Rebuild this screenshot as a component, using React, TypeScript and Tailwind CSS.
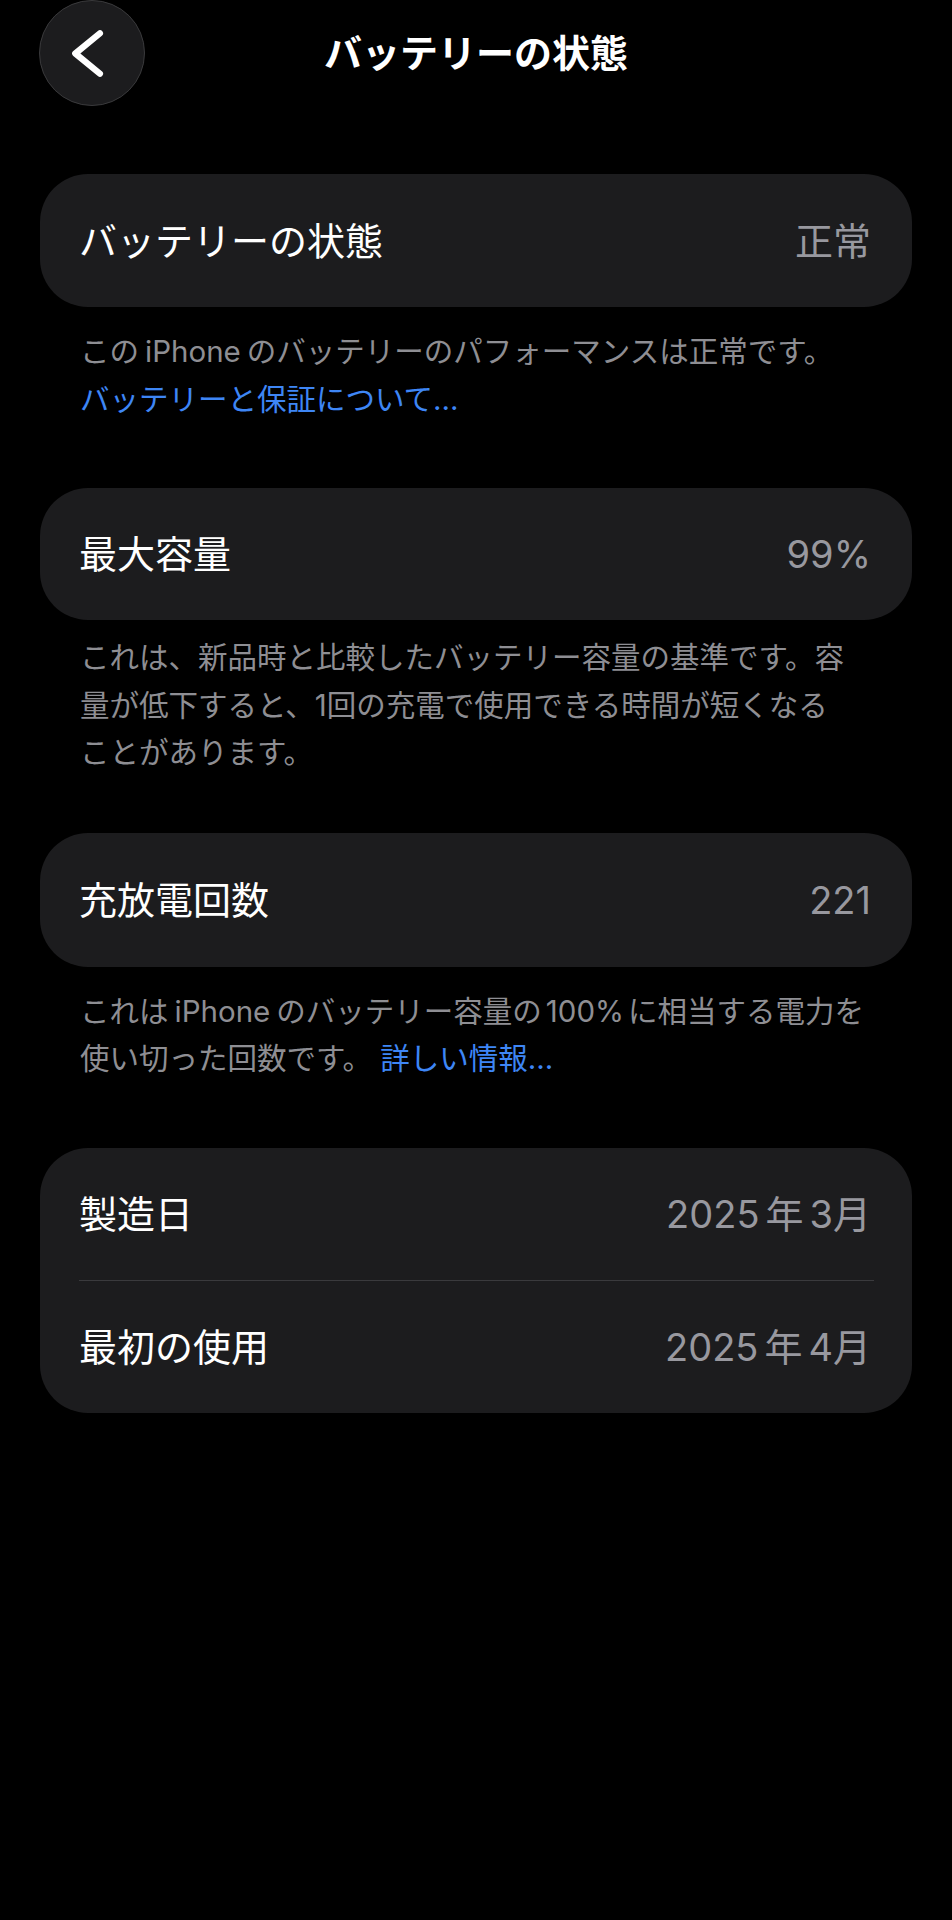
import React from "react";

const font = { fontFamily: 'Inter, "Noto Sans CJK JP", sans-serif' };

function BackButton() {
  return (
    <button className="flex h-[106px] w-[106px] items-center justify-center rounded-full border-[1.5px] border-[#3a3a3c] bg-[#1c1c1e]">
      <svg width="106" height="106" viewBox="0 0 106 106" fill="none">
        <path
          d="M61 33 L36 53.5 L61 74"
          stroke="#ffffff"
          strokeWidth="6.5"
          strokeLinecap="round"
          strokeLinejoin="round"
        />
      </svg>
    </button>
  );
}

function Row({ label, value, h = "h-[133px]" }: { label: string; value: React.ReactNode; h?: string }) {
  return (
    <div className={`flex ${h} items-center justify-between pl-[39px] pr-[41px]`}>
      <span className="text-[38px] leading-none text-white">{label}</span>
      <span className="text-[38px] leading-none text-[#98989f]">{value}</span>
    </div>
  );
}

function Note({ children, className = "" }: { children: React.ReactNode; className?: string }) {
  return (
    <div className={`pl-[80px] pr-10 text-[29.5px] leading-[47.5px] text-[#8e8e93] ${className}`}>{children}</div>
  );
}

const Link = ({ children }: { children: React.ReactNode }) => (
  <span className="text-[#3e86f5]">{children}</span>
);

export default function App() {
  return (
    <div className="min-h-[1920px] bg-black" style={font}>
      {/* nav */}
      <div className="grid h-[106px] grid-cols-[1fr_auto_1fr] items-center px-[39px]">
        <BackButton />
        <h1 className="text-[38px] font-bold leading-none text-white">バッテリーの状態</h1>
        <div />
      </div>

      <div className="mx-10 mt-[68px] rounded-[48px] bg-[#1c1c1e]">
        <Row label="バッテリーの状態" value="正常" />
      </div>
      <Note className="mt-[21px]">
        <div className="whitespace-nowrap">
          この<span className="mx-[6px]">iPhone</span>のバッテリーのパフォーマンスは正常です。
        </div>
        <div className="whitespace-nowrap">
          <Link>バッテリーと保証について...</Link>
        </div>
      </Note>

      <div className="mx-10 mt-[65px] rounded-[48px] bg-[#1c1c1e]">
        <Row label="最大容量" value="99%" h="h-[132px]" />
      </div>
      <Note className="mt-[14px]">
        <div className="whitespace-nowrap">これは、新品時と比較したバッテリー容量の基準です。容</div>
        <div className="whitespace-nowrap">量が低下すると、1回の充電で使用できる時間が短くなる</div>
        <div className="whitespace-nowrap">ことがあります。</div>
      </Note>

      <div className="mx-10 mt-[56px] rounded-[48px] bg-[#1c1c1e]">
        <Row label="充放電回数" value="221" h="h-[134px]" />
      </div>
      <Note className="mt-[21px]">
        <div className="whitespace-nowrap">
          これは<span className="mx-[6px]">iPhone</span>のバッテリー容量の<span className="mx-[4px]">100%</span>に相当する電力を
        </div>
        <div className="whitespace-nowrap">
          使い切った回数です。 <Link>詳しい情報...</Link>
        </div>
      </Note>

      <div className="mx-10 mt-[65px] rounded-[48px] bg-[#1c1c1e]">
        <Row
          label="製造日"
          h="h-[132px]"
          value={
            <>
              2025<span className="mx-[6px]">年</span>3月
            </>
          }
        />
        <div className="ml-[39px] mr-[38px] h-[1.5px] bg-[#3a3a3d]" />
        <Row
          label="最初の使用"
          h="h-[132px]"
          value={
            <>
              2025<span className="mx-[6px]">年</span>4月
            </>
          }
        />
      </div>
    </div>
  );
}
